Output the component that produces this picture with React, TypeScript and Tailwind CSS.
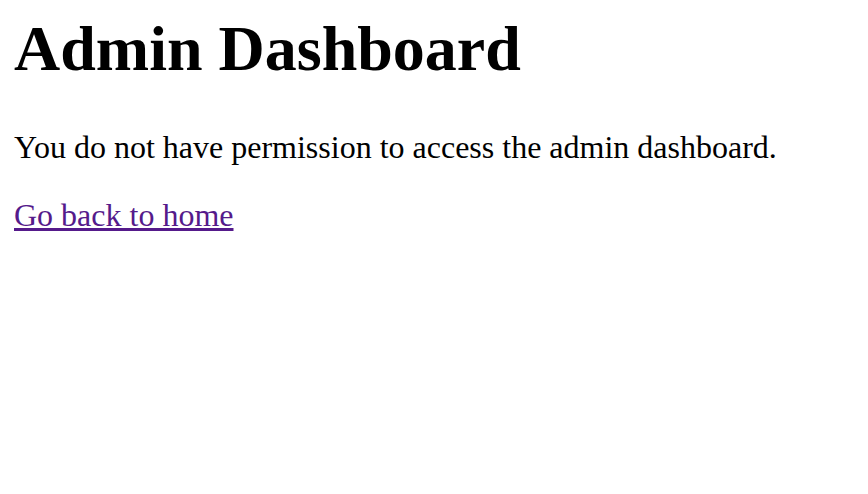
export default function App() {
  return (
    <div className="min-h-screen bg-white px-[14px] text-black" style={{ fontFamily: '"Liberation Serif", "Times New Roman", serif' }}>
      <h1 className="m-0 pt-[12px] text-[64px] font-bold leading-[1.15]">Admin Dashboard</h1>
      <p className="mt-[43px] text-[32px] leading-[1.15]">You do not have permission to access the admin dashboard.</p>
      <a href="#" className="mt-[32px] block w-fit text-[32px] leading-[1.15] text-[#551a8b] underline">Go back to home</a>
    </div>
  );
}
